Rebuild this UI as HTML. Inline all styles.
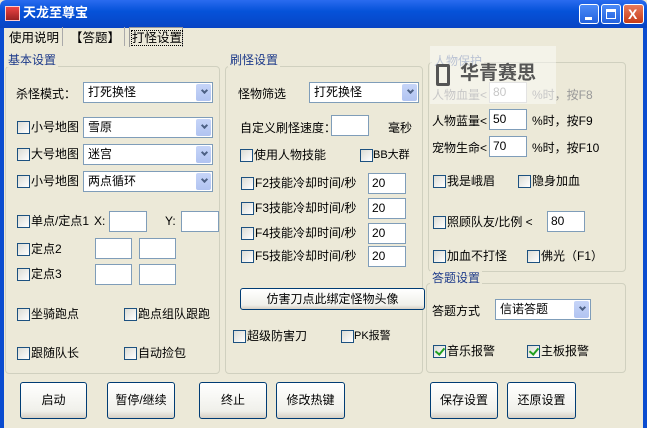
<!DOCTYPE html><html><head><meta charset="utf-8"><style>
*{margin:0;padding:0;box-sizing:border-box}
body{width:647px;height:428px;overflow:hidden;background:#ece9d8;font:12px "Liberation Sans","Noto Sans CJK SC",sans-serif;color:#000;position:relative}
.a{position:absolute;white-space:nowrap;line-height:14px}
.title{position:absolute;left:0;top:0;width:647px;height:28px;background:linear-gradient(#2a6bef,#0552d9 40%,#0844c4);border-radius:6px 6px 0 0}
.frame{position:absolute;left:0;top:28px;width:4px;height:400px;background:#0a4cd0}
.frame.r{left:643px}
.tb{position:absolute;top:4px;width:20px;height:20px;border:1px solid #fff;border-radius:3px;background:linear-gradient(#4b8af7,#2463de)}
.grp{position:absolute;border:1px solid #d0d0bf;border-radius:4px}
.gl{position:absolute;background:#ece9d8;color:#1d3a8a;padding:0 2px;line-height:14px}
.sel{position:absolute;height:21px;background:#fff;border:1px solid #7f9db9;padding:3px 4px;line-height:13px}
.sel:after{content:"";position:absolute;right:1px;top:1px;width:15px;height:17px;background:linear-gradient(#c6d5f8,#b1c4f1);border-radius:2px}
.sel i{position:absolute;right:5px;top:5px;width:5px;height:5px;border-right:2px solid #4d6185;border-bottom:2px solid #4d6185;transform:rotate(45deg);z-index:2}
.in{position:absolute;height:21px;background:#fff;border:1px solid #7f9db9;padding:3px 3px;line-height:13px}
.cb{position:absolute;width:13px;height:13px;border:1px solid #1c5180;background:linear-gradient(135deg,#dcdcd5,#fff)}
.cb.k:after{content:"";position:absolute;left:3px;top:0;width:4px;height:7px;border-right:2px solid #21a121;border-bottom:2px solid #21a121;transform:rotate(40deg)}
.btn{position:absolute;height:37px;border:1px solid #003c74;border-radius:3px;background:linear-gradient(#fff,#f0f0ea 80%,#d6d0c5);text-align:center;line-height:35px}
</style></head><body>
<div class="title"></div>
<div class="a" style="left:5px;top:6px;width:15px;height:15px;background:linear-gradient(#e44,#922);border:1px solid #fcc"></div>
<div class="a" style="left:23px;top:6px;color:#fff;font-size:13px;font-weight:bold">天龙至尊宝</div>
<div class="tb" style="left:579px"><div style="position:absolute;left:5px;top:12px;width:7px;height:3px;background:#fff"></div></div>
<div class="tb" style="left:601px"><div style="position:absolute;left:4px;top:4px;width:10px;height:10px;border:1px solid #fff;border-top-width:3px"></div></div>
<div class="tb" style="left:623px;width:21px;background:linear-gradient(#e87a5c,#c63b17)"><div style="position:absolute;left:4px;top:1px;color:#fff;font-weight:bold;font-size:14px">X</div></div>
<div class="frame"></div><div class="frame r"></div>
<div class="a" style="left:9px;top:31px;font-size:12.5px">使用说明</div>
<div class="a" style="left:62px;top:27px;width:1px;height:19px;background:#aaa"></div>
<div class="a" style="left:70px;top:31px;font-size:12.5px">【答题】</div>
<div class="a" style="left:124px;top:27px;width:1px;height:19px;background:#aaa"></div>
<div class="a" style="left:129px;top:27px;width:54px;height:20px;border:1px solid #999;border-bottom:none;background:#ece9d8"></div>
<div class="a" style="left:132px;top:31px;outline:1px dotted #000;font-size:12.5px">打怪设置</div>

<div class="grp" style="left:5px;top:66px;width:215px;height:308px"></div>
<div class="gl" style="left:6px;top:53px">基本设置</div>
<div class="grp" style="left:225px;top:66px;width:198px;height:308px"></div>
<div class="gl" style="left:228px;top:53px">刷怪设置</div>
<div class="grp" style="left:428px;top:62px;width:198px;height:210px"></div>
<div class="gl" style="left:432px;top:54px;color:#8090b0">人物保护</div>
<div class="grp" style="left:426px;top:283px;width:200px;height:90px"></div>
<div class="gl" style="left:430px;top:271px">答题设置</div>

<div class="a" style="left:16px;top:87px">杀怪模式：</div>
<div class="sel" style="left:83px;top:82px;width:130px">打死换怪<i></i></div>
<div class="cb" style="left:17px;top:121px"></div><div class="a" style="left:31px;top:120px">小号地图</div>
<div class="sel" style="left:83px;top:117px;width:130px">雪原<i></i></div>
<div class="cb" style="left:17px;top:148px"></div><div class="a" style="left:31px;top:147px">大号地图</div>
<div class="sel" style="left:83px;top:144px;width:130px">迷宫<i></i></div>
<div class="cb" style="left:17px;top:175px"></div><div class="a" style="left:31px;top:174px">小号地图</div>
<div class="sel" style="left:83px;top:171px;width:130px">两点循环<i></i></div>
<div class="cb" style="left:17px;top:215px"></div><div class="a" style="left:31px;top:214px">单点/定点1</div>
<div class="a" style="left:94px;top:214px">X:</div><div class="in" style="left:109px;top:211px;width:38px"></div>
<div class="a" style="left:165px;top:214px">Y:</div><div class="in" style="left:181px;top:211px;width:38px"></div>
<div class="cb" style="left:17px;top:243px"></div><div class="a" style="left:31px;top:242px">定点2</div>
<div class="in" style="left:95px;top:238px;width:37px"></div><div class="in" style="left:139px;top:238px;width:37px"></div>
<div class="cb" style="left:17px;top:268px"></div><div class="a" style="left:31px;top:267px">定点3</div>
<div class="in" style="left:95px;top:264px;width:37px"></div><div class="in" style="left:139px;top:264px;width:37px"></div>
<div class="cb" style="left:17px;top:308px"></div><div class="a" style="left:31px;top:307px">坐骑跑点</div>
<div class="cb" style="left:124px;top:308px"></div><div class="a" style="left:138px;top:307px">跑点组队跟跑</div>
<div class="cb" style="left:17px;top:347px"></div><div class="a" style="left:31px;top:346px">跟随队长</div>
<div class="cb" style="left:124px;top:347px"></div><div class="a" style="left:138px;top:346px">自动捡包</div>

<div class="a" style="left:238px;top:87px">怪物筛选</div>
<div class="sel" style="left:309px;top:82px;width:110px">打死换怪<i></i></div>
<div class="a" style="left:240px;top:121px">自定义刷怪速度：</div>
<div class="in" style="left:331px;top:115px;width:38px"></div>
<div class="a" style="left:388px;top:121px">毫秒</div>
<div class="cb" style="left:240px;top:149px"></div><div class="a" style="left:254px;top:148px">使用人物技能</div>
<div class="cb" style="left:360px;top:149px"></div><div class="a" style="left:373px;top:148px;font-size:11px">BB大群</div>
<div class="cb" style="left:241px;top:177px"></div><div class="a" style="left:255px;top:176px">F2技能冷却时间/秒</div><div class="in" style="left:368px;top:173px;width:38px">20</div>
<div class="cb" style="left:241px;top:202px"></div><div class="a" style="left:255px;top:201px">F3技能冷却时间/秒</div><div class="in" style="left:368px;top:198px;width:38px">20</div>
<div class="cb" style="left:241px;top:227px"></div><div class="a" style="left:255px;top:226px">F4技能冷却时间/秒</div><div class="in" style="left:368px;top:223px;width:38px">20</div>
<div class="cb" style="left:241px;top:250px"></div><div class="a" style="left:255px;top:249px">F5技能冷却时间/秒</div><div class="in" style="left:368px;top:246px;width:38px">20</div>
<div class="btn" style="left:240px;top:288px;width:185px;height:22px;line-height:20px">仿害刀点此绑定怪物头像</div>
<div class="cb" style="left:233px;top:330px"></div><div class="a" style="left:247px;top:329px">超级防害刀</div>
<div class="cb" style="left:341px;top:330px"></div><div class="a" style="left:354px;top:329px;font-size:11px">PK报警</div>

<div class="a" style="left:432px;top:88px;color:#999">人物血量&lt;</div><div class="in" style="left:489px;top:82px;width:38px;color:#999;border-color:#ccc">80</div><div class="a" style="left:532px;top:88px;color:#999">%时，按F8</div>
<div class="a" style="left:432px;top:114px">人物蓝量&lt;</div><div class="in" style="left:489px;top:109px;width:38px">50</div><div class="a" style="left:532px;top:114px">%时，按F9</div>
<div class="a" style="left:432px;top:141px">宠物生命&lt;</div><div class="in" style="left:489px;top:136px;width:38px">70</div><div class="a" style="left:532px;top:141px">%时，按F10</div>
<div class="a" style="left:430px;top:46px;width:126px;height:58px;background:rgba(255,255,255,.45)"></div>
<div class="a" style="left:436px;top:64px;width:14px;height:22px;border:3px solid #555;border-radius:2px"></div>
<div class="a" style="left:460px;top:63px;font-size:19px;line-height:22px;font-weight:bold;color:#555">华青赛思</div>
<div class="cb" style="left:433px;top:175px"></div><div class="a" style="left:447px;top:174px">我是峨眉</div>
<div class="cb" style="left:518px;top:175px"></div><div class="a" style="left:532px;top:174px">隐身加血</div>
<div class="cb" style="left:433px;top:216px"></div><div class="a" style="left:447px;top:215px">照顾队友/比例 &lt;</div>
<div class="in" style="left:547px;top:211px;width:38px">80</div>
<div class="cb" style="left:433px;top:250px"></div><div class="a" style="left:447px;top:249px">加血不打怪</div>
<div class="cb" style="left:527px;top:250px"></div><div class="a" style="left:541px;top:249px">佛光（F1）</div>
<div class="a" style="left:432px;top:304px">答题方式</div>
<div class="sel" style="left:495px;top:299px;width:96px">信诺答题<i></i></div>
<div class="cb k" style="left:433px;top:345px"></div><div class="a" style="left:447px;top:344px">音乐报警</div>
<div class="cb k" style="left:527px;top:345px"></div><div class="a" style="left:541px;top:344px">主板报警</div>

<div class="btn" style="left:20px;top:382px;width:67px">启动</div>
<div class="btn" style="left:107px;top:382px;width:68px">暂停/继续</div>
<div class="btn" style="left:199px;top:382px;width:68px">终止</div>
<div class="btn" style="left:276px;top:382px;width:69px">修改热键</div>
<div class="btn" style="left:430px;top:382px;width:68px">保存设置</div>
<div class="btn" style="left:507px;top:382px;width:69px">还原设置</div>
</body></html>
